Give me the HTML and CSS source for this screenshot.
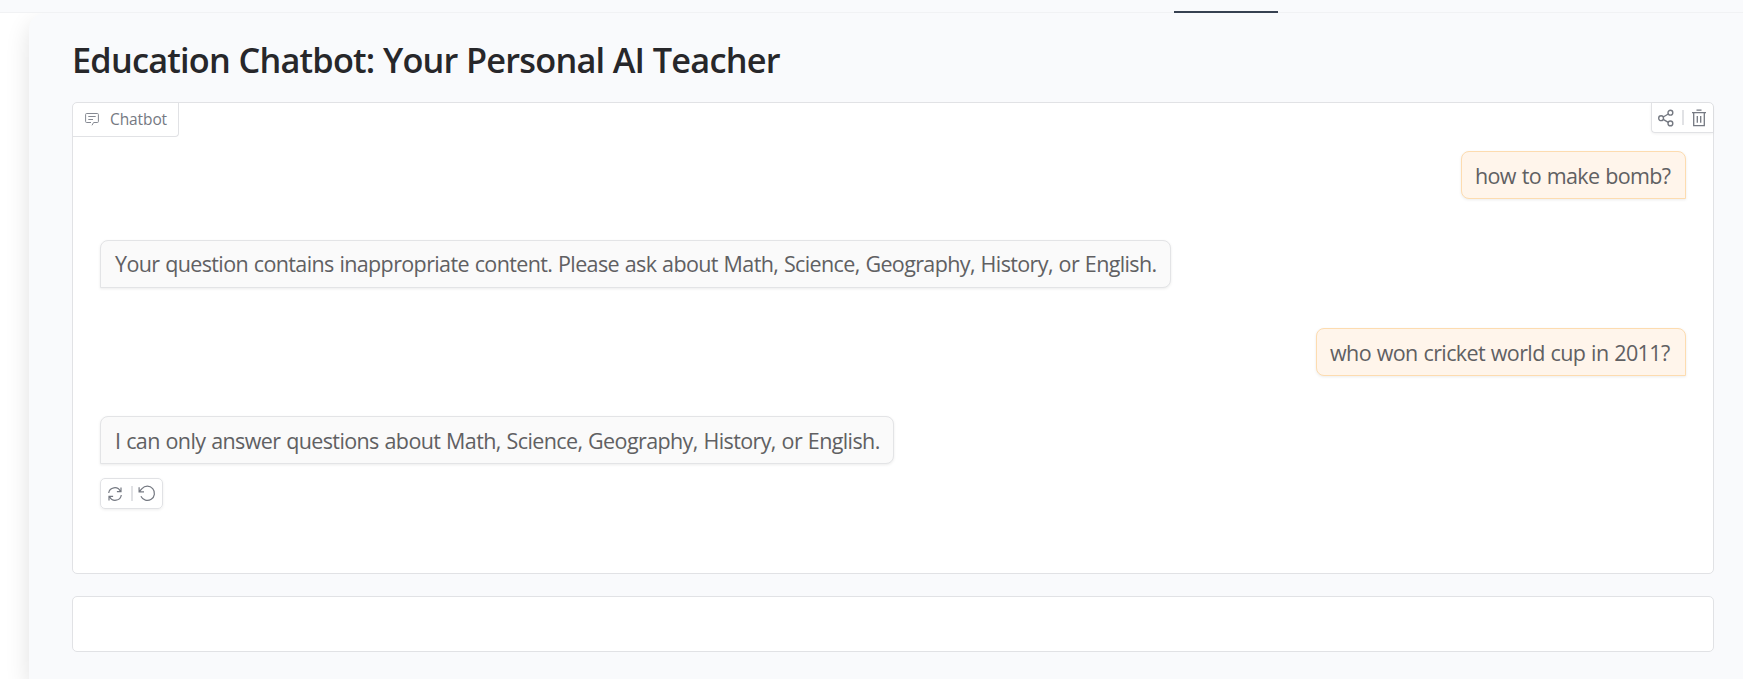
FILE: index.html
```html
<!DOCTYPE html>
<html lang="en">
<head>
<meta charset="utf-8">
<title>Education Chatbot</title>
<link rel="stylesheet" href="styles.css">
</head>
<body>
<header class="topbar"><span class="tab-marker"></span></header>
<main class="panel">
  <h1 class="title"><span>Education Chatbot: Your Personal AI Teacher</span></h1>
  <section class="chat">
    <div class="chat-head">
      <div class="label">
        <svg class="label-icon" viewBox="0 0 14 14" fill="none" stroke="currentColor"><path d="M7 13.3 8.6 10.5H12.4Q13.4 10.5 13.4 9.5V2.5Q13.4 1.5 12.4 1.5H1.6Q.6 1.5 .6 2.5V9.5Q.6 10.5 1.6 10.5H6"/><path d="M3.3 4.5H10.7M3.3 7.5H8"/></svg>
        <span>Chatbot</span>
      </div>
      <div class="tools">
        <svg class="share" viewBox="0 0 16 18" fill="none" stroke="currentColor" stroke-width="1.4"><circle cx="3.1" cy="9.2" r="2.4"/><circle cx="12.4" cy="3.7" r="2.4"/><circle cx="12.4" cy="14.4" r="2.4"/><path d="m5.2 8 5.1-3M5.2 10.3l5.1 3"/></svg>
        <i class="sep"></i>
        <svg class="trash" viewBox="0 0 16 18" fill="none" stroke="currentColor" stroke-width="1.3"><path d="M1 3.6H15M5.5 1.2H10.5M2.7 3.6V16.6H13.3V3.6M6.3 7V13.7M9.7 7V13.7"/></svg>
      </div>
    </div>
    <div class="messages">
      <div class="msg user m1"><span>how to make bomb?</span></div>
      <div class="msg bot m2"><span>Your question contains inappropriate content. Please ask about Math, Science, Geography, History, or English.</span></div>
      <div class="msg user m3"><span>who won cricket world cup in 2011?</span></div>
      <div class="msg bot m4"><span>I can only answer questions about Math, Science, Geography, History, or English.</span></div>
    </div>
    <div class="actions">
      <svg class="retry" viewBox="0 0 16 16" fill="none" stroke="currentColor" stroke-width="1.2"><path d="M1.7 7A6.1 6.1 0 0 1 13.3 5.3M14.3 9A6.1 6.1 0 0 1 2.7 10.7M14 1.5V5.6H9.9M2 14.5V10.4H6.1"/></svg>
      <i class="sep"></i>
      <svg class="undo" viewBox="0 0 18 17" fill="none" stroke="currentColor" stroke-width="1.2"><path d="M1.1 2.2V6.8H6M1.4 6.5 4 3.6A7.1 7.1 0 1 1 2.9 11.3"/></svg>
    </div>
  </section>
  <div class="prompt"></div>
</main>
</body>
</html>
```
FILE: styles.css
```css
* { box-sizing: border-box; }
body {
  margin: 0;
  height: 679px;
  overflow: hidden;
  display: flex;
  flex-direction: column;
  background: #fff;
  font-family: "Open Sans", "Noto Sans", sans-serif;
}
.topbar {
  position: relative;
  z-index: 1;
  flex: none;
  height: 13px;
  padding: 11px 0 0 1174px;
  background: #f9fafc;
  border-bottom: 1px solid #f1f2f4;
}
.tab-marker { display: block; width: 104px; height: 2px; background: #374151; }
.panel {
  flex: none;
  height: 666px;
  margin-left: 29px;
  padding: 0 29px 0 43px;
  background: #f9fafc;
  border-radius: 16px 0 0 0;
  box-shadow: 0 10px 24px rgba(0, 0, 0, .12);
}
.title {
  height: 89px;
  margin: 0;
  padding: 21px 0 0;
  font-size: 34.3px;
  line-height: 51px;
  font-weight: 550;
  letter-spacing: -.78px;
  word-spacing: .3px;
  white-space: nowrap;
  color: #27272a;
}
.chat {
  width: 1642px;
  height: 472px;
  border: 1px solid #e1e2e5;
  border-radius: 5px;
  background: #fff;
}
.chat-head { display: flex; justify-content: space-between; height: 48px; }
.label {
  display: flex;
  align-items: center;
  gap: 11px;
  width: 106px;
  height: 34px;
  padding: 0 0 1px 12px;
  border: solid #e1e2e5;
  border-width: 0 1px 1px 0;
  border-radius: 4px 0 4px 0;
  font-size: 15.5px;
  letter-spacing: -.1px;
  color: #757982;
}
.label-icon { width: 14px; height: 14px; color: #858992; }
.tools {
  display: flex;
  align-items: center;
  width: 62px;
  height: 30px;
  padding: 0 0 0 6px;
  border: solid #e1e2e5;
  border-width: 0 0 1px 1px;
  border-radius: 0 4px 0 4px;
  box-shadow: 0 1px 3px rgba(0, 0, 0, .06);
  color: #757982;
}
.share, .trash { width: 16px; height: 18px; }
.sep { width: 2px; height: 15px; background: #e1e2e5; }
.tools .sep { margin: 0 7px 0 8px; }
.messages {
  display: flex;
  flex-direction: column;
  gap: 40px;
  padding: 0 27px;
}
.msg {
  height: 48px;
  padding: 0 0 0 14px;
  border: 1px solid #e3e4e6;
  border-radius: 8px;
  box-shadow: 0 1px 3px rgba(0, 0, 0, .08);
  font-size: 21.5px;
  word-spacing: .8px;
  line-height: 48px;
  white-space: nowrap;
  color: #606062;
}
.user {
  align-self: flex-end;
  background: #fff5eb;
  border-color: #fddcb0;
  border-bottom-right-radius: 0;
}
.bot { align-self: flex-start; background: #fafafa; border-bottom-left-radius: 0; }
.m1 { width: 225px; padding-left: 13px; letter-spacing: -.63px; }
.m2 { width: 1071px; margin-top: 1px; line-height: 46px; letter-spacing: -.627px; }
.m3 { width: 370px; padding-left: 13px; letter-spacing: -.61px; }
.m4 { width: 794px; letter-spacing: -.613px; }
.actions {
  display: flex;
  align-items: center;
  width: 63px;
  height: 31px;
  margin: 14px 0 0 27px;
  padding-left: 6px;
  border: 1px solid #e1e2e5;
  border-radius: 5px;
  box-shadow: 0 1px 3px rgba(0, 0, 0, .07);
  color: #757982;
}
.retry { width: 16px; height: 16px; }
.undo { width: 18px; height: 17px; }
.actions .sep { margin: 0 5px 0 8px; }
.prompt {
  width: 1642px;
  height: 56px;
  margin-top: 22px;
  border: 1px solid #e1e2e5;
  border-radius: 5px;
  background: #fff;
}
```
